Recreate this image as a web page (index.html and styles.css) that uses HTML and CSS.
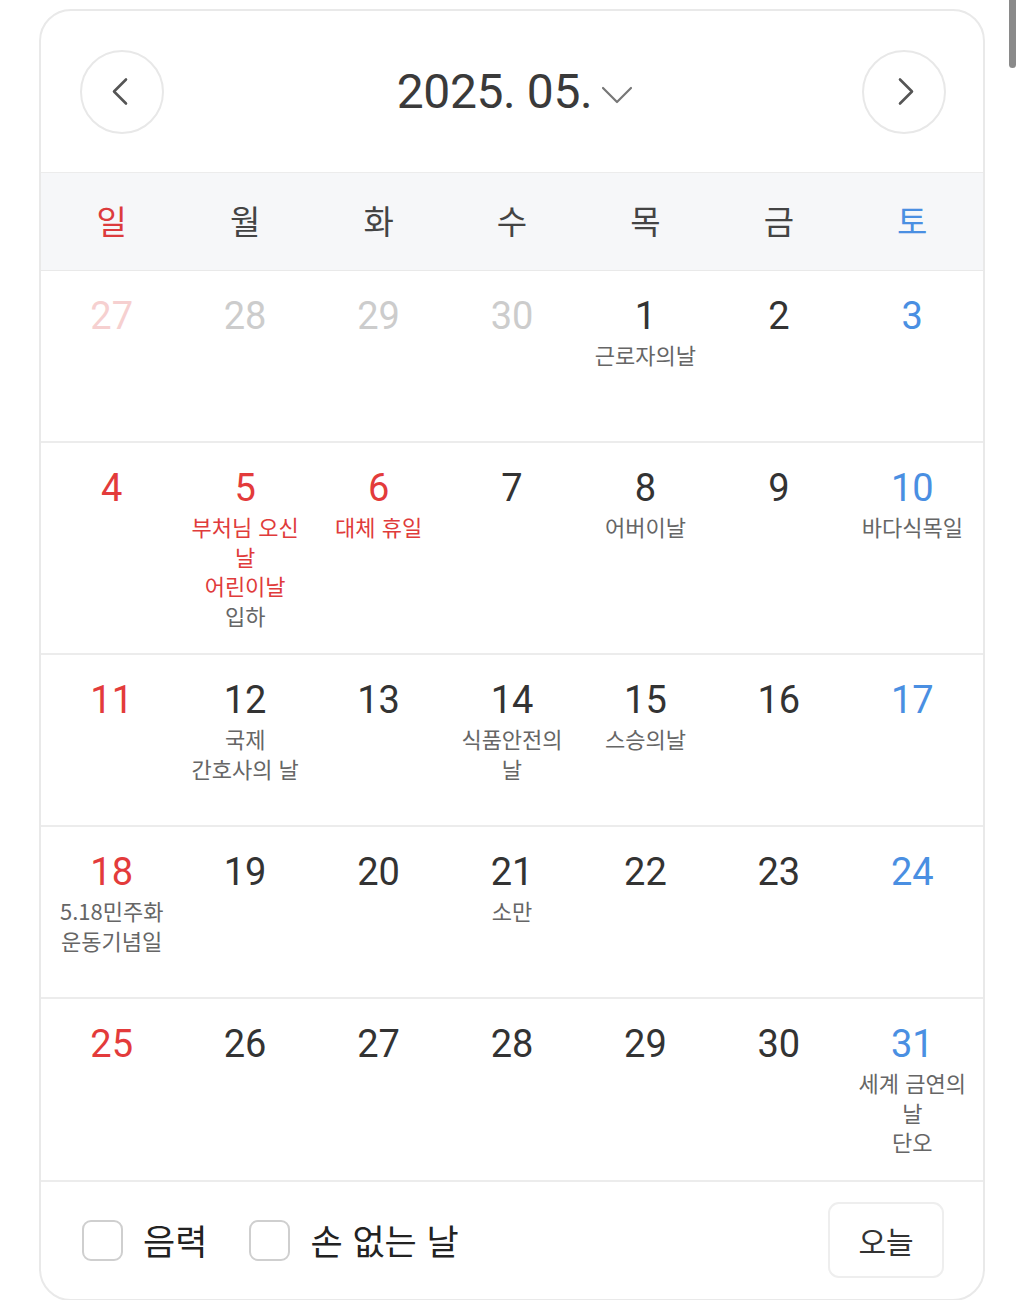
FILE: index.html
```html
<!DOCTYPE html>
<html lang="ko">
<head>
<meta charset="utf-8">
<title>달력</title>
<link rel="stylesheet" href="styles.css">
</head>
<body>
<div class="scrollbar"></div>
<div class="page">
  <div class="card">
    <div class="header">
      <button class="nav-btn" aria-label="이전 달">
        <svg width="30" height="30" viewBox="0 0 30 30"><path d="M19 2.5 L7 14.5 L19 26.5" fill="none" stroke="#555" stroke-width="2.6" stroke-linecap="round" stroke-linejoin="round"/></svg>
      </button>
      <div class="title">
        <span class="title-text">2025. 05.</span>
        <svg class="title-caret" width="32" height="20" viewBox="0 0 32 20"><path d="M2 3 L16 17 L30 3" fill="none" stroke="#777" stroke-width="2.2" stroke-linecap="round" stroke-linejoin="round"/></svg>
      </div>
      <button class="nav-btn" aria-label="다음 달">
        <svg width="30" height="30" viewBox="0 0 30 30"><path d="M11 2.5 L23 14.5 L11 26.5" fill="none" stroke="#555" stroke-width="2.6" stroke-linecap="round" stroke-linejoin="round"/></svg>
      </button>
    </div>

    <div class="weekdays">
      <div class="wd sun">일</div>
      <div class="wd">월</div>
      <div class="wd">화</div>
      <div class="wd">수</div>
      <div class="wd">목</div>
      <div class="wd">금</div>
      <div class="wd sat">토</div>
    </div>

    <div class="week">
      <div class="cell"><div class="num prev-sun">27</div></div>
      <div class="cell"><div class="num prev">28</div></div>
      <div class="cell"><div class="num prev">29</div></div>
      <div class="cell"><div class="num prev">30</div></div>
      <div class="cell"><div class="num">1</div><div class="labels"><div class="lbl">근로자의날</div></div></div>
      <div class="cell"><div class="num">2</div></div>
      <div class="cell"><div class="num sat">3</div></div>
    </div>

    <div class="week">
      <div class="cell"><div class="num sun">4</div></div>
      <div class="cell"><div class="num sun">5</div><div class="labels"><div class="lbl red">부처님 오신 날</div><div class="lbl red">어린이날</div><div class="lbl">입하</div></div></div>
      <div class="cell"><div class="num sun">6</div><div class="labels"><div class="lbl red">대체 휴일</div></div></div>
      <div class="cell"><div class="num">7</div></div>
      <div class="cell"><div class="num">8</div><div class="labels"><div class="lbl">어버이날</div></div></div>
      <div class="cell"><div class="num">9</div></div>
      <div class="cell"><div class="num sat">10</div><div class="labels"><div class="lbl">바다식목일</div></div></div>
    </div>

    <div class="week">
      <div class="cell"><div class="num sun">11</div></div>
      <div class="cell"><div class="num">12</div><div class="labels"><div class="lbl">국제 간호사의 날</div></div></div>
      <div class="cell"><div class="num">13</div></div>
      <div class="cell"><div class="num">14</div><div class="labels"><div class="lbl">식품안전의 날</div></div></div>
      <div class="cell"><div class="num">15</div><div class="labels"><div class="lbl">스승의날</div></div></div>
      <div class="cell"><div class="num">16</div></div>
      <div class="cell"><div class="num sat">17</div></div>
    </div>

    <div class="week">
      <div class="cell"><div class="num sun">18</div><div class="labels"><div class="lbl">5.18민주화 운동기념일</div></div></div>
      <div class="cell"><div class="num">19</div></div>
      <div class="cell"><div class="num">20</div></div>
      <div class="cell"><div class="num">21</div><div class="labels"><div class="lbl">소만</div></div></div>
      <div class="cell"><div class="num">22</div></div>
      <div class="cell"><div class="num">23</div></div>
      <div class="cell"><div class="num sat">24</div></div>
    </div>

    <div class="week">
      <div class="cell"><div class="num sun">25</div></div>
      <div class="cell"><div class="num">26</div></div>
      <div class="cell"><div class="num">27</div></div>
      <div class="cell"><div class="num">28</div></div>
      <div class="cell"><div class="num">29</div></div>
      <div class="cell"><div class="num">30</div></div>
      <div class="cell"><div class="num sat">31</div><div class="labels"><div class="lbl">세계 금연의 날</div><div class="lbl">단오</div></div></div>
    </div>

    <div class="footer">
      <div class="options">
        <label class="opt"><span class="box"></span><span class="opt-text">음력</span></label>
        <label class="opt"><span class="box"></span><span class="opt-text">손 없는 날</span></label>
      </div>
      <button class="today">오늘</button>
    </div>
  </div>
</div>
</body>
</html>
```

FILE: styles.css
```css
* { box-sizing: border-box; }

html, body {
  margin: 0;
  padding: 0;
  background: #ffffff;
}

body {
  font-family: Roboto, "Noto Sans CJK KR", "Noto Sans", sans-serif;
  color: #333;
  position: relative;
}

.scrollbar {
  position: absolute;
  top: 0;
  left: 1009px;
  width: 7px;
  height: 68px;
  background: #8a8a8a;
  border-radius: 0 0 4px 4px;
}

.page {
  padding: 9px 0 0 39px;
}

.card {
  width: 946px;
  border: 2px solid #e9e9e9;
  border-radius: 32px;
  background: #fff;
  overflow: hidden;
}

.header {
  height: 162px;
  display: flex;
  align-items: center;
  justify-content: space-between;
  padding: 0 37px 0 39px;
  border-bottom: 1px solid #ececec;
}

.nav-btn {
  width: 84px;
  height: 84px;
  border-radius: 50%;
  border: 2px solid #e8e8e8;
  background: #fff;
  display: flex;
  align-items: center;
  justify-content: center;
  padding: 0;
}

.title {
  display: flex;
  align-items: center;
  gap: 9px;
  margin-left: 4px;
}

.title-text {
  font-family: Roboto, "Noto Sans CJK KR", sans-serif;
  font-size: 48px;
  color: #3a3a3a;
  letter-spacing: -0.4px;
}

.title-caret {
  margin-top: 6px;
}

.weekdays {
  height: 98px;
  background: #f6f7f9;
  border-bottom: 1px solid #e9e9e9;
  display: grid;
  grid-template-columns: repeat(7, 1fr);
  padding: 0 4px;
  align-items: center;
}

.wd {
  text-align: center;
  font-family: "Noto Sans CJK KR", sans-serif;
  font-size: 33px;
  color: #444;
  line-height: 40px;
  margin-top: -4px;
}

.wd.sun { color: #dc3b3d; }
.wd.sat { color: #4a8fe2; }

.week {
  display: grid;
  grid-template-columns: repeat(7, 1fr);
  padding: 0 4px;
  border-bottom: 2px solid #ececec;
}

.cell {
  min-height: 170px;
  padding: 24px 11px 23px;
  text-align: center;
}

.num {
  font-family: Roboto, "Noto Sans", sans-serif;
  font-size: 38px;
  line-height: 42px;
  color: #333;
}

.num.sun { color: #e33b3b; }
.num.sat { color: #4a8fe2; }
.num.prev { color: #cccccc; }
.num.prev-sun { color: #f6d0d0; }

.labels {
  margin-top: 3px;
}

.lbl {
  font-family: "Noto Sans CJK KR", sans-serif;
  font-size: 22px;
  line-height: 29.5px;
  color: #666;
  word-break: keep-all;
}

.lbl.red { color: #e03b3b; }

.footer {
  height: 117px;
  display: flex;
  align-items: center;
  justify-content: space-between;
  padding: 0 39px 0 41px;
}

.options {
  display: flex;
  align-items: center;
  gap: 42px;
}

.opt {
  display: flex;
  align-items: center;
  gap: 20px;
}

.box {
  width: 41px;
  height: 41px;
  border: 2px solid #cfcfcf;
  border-radius: 9px;
  background: #fff;
}

.opt-text {
  font-family: "Noto Sans CJK KR", sans-serif;
  font-size: 35px;
  color: #222;
  line-height: 40px;
}

.today {
  width: 116px;
  height: 76px;
  border: 2px solid #eeeeee;
  border-radius: 11px;
  background: #fff;
  font-family: "Noto Sans CJK KR", sans-serif;
  font-size: 30px;
  color: #333;
  padding: 0;
}
```
